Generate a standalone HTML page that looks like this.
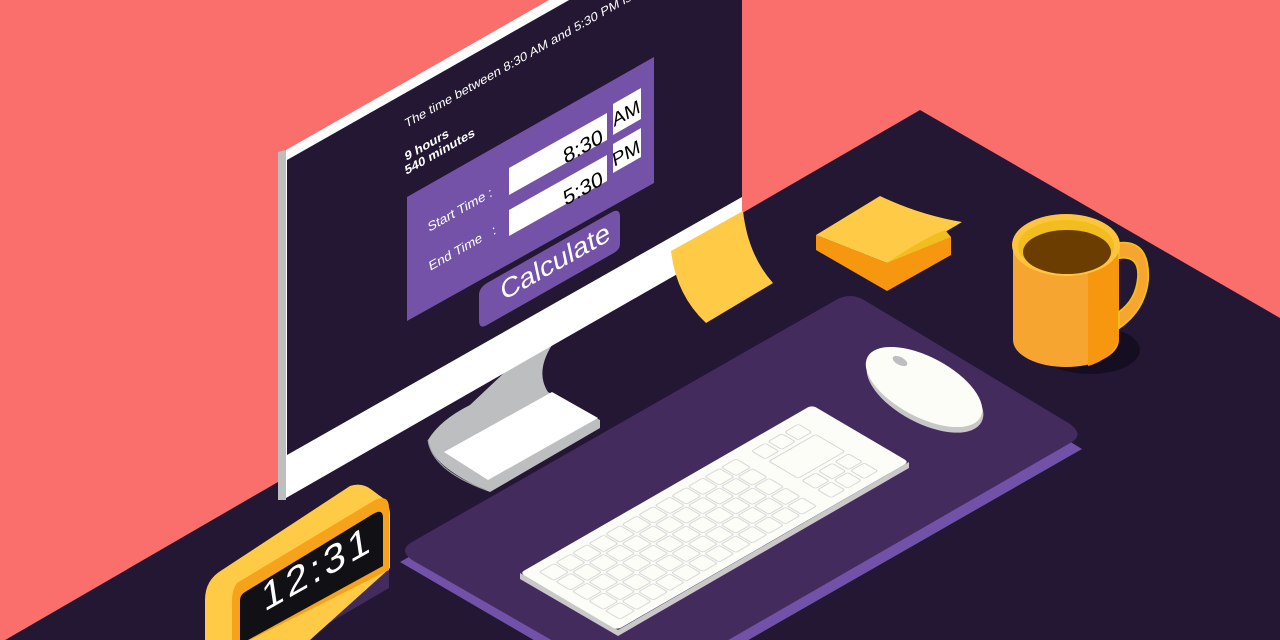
<!DOCTYPE html>
<html><head><meta charset="utf-8"><style>
html,body{margin:0;padding:0;width:1280px;height:640px;overflow:hidden;background:#FA6E6C}
svg{display:block}
text{font-family:"Liberation Sans",sans-serif}
</style></head><body>
<svg width="1280" height="640" viewBox="0 0 1280 640" xmlns="http://www.w3.org/2000/svg">
<defs>
<pattern id="keys" patternUnits="userSpaceOnUse" width="17" height="17" x="10" y="8">
<rect x="1" y="1" width="15" height="15" rx="2" fill="#FDFDF8" stroke="#D6D6D6" stroke-width="1"/>
</pattern>
</defs>
<rect width="1280" height="640" fill="#FA6E6C"/>
<polygon points="920,110 1280,318 1280,640 0,640 0,643" fill="#231733"/>

<ellipse cx="1090" cy="350" rx="50" ry="24" fill="#150E22"/>

<polygon points="400,562 850,306 1082,449 640,702" fill="#7252A8"/>
<path d="M412,542 L836,300 Q850,292 864,300 L1070,424 Q1084,434 1072,442 L652,684 Q640,690 628,684 L412,560 Q398,550 412,542 Z" fill="#442B5E"/>

<polygon points="520,573 520,579 618,636 909,468 909,462 618,630" fill="#C9C9C9"/>
<g transform="matrix(0.973,-0.56,0.97,0.57,520,573)">
<rect x="0" y="0" width="300" height="100" rx="4" fill="#FDFDF8"/>
<rect x="10" y="8" width="204" height="85" fill="url(#keys)"/>
<rect x="225" y="8" width="68" height="85" fill="#FDFDF8"/>
<rect x="228" y="10" width="14" height="14" rx="2" fill="#FDFDF8" stroke="#D6D6D6"/>
<rect x="245" y="10" width="14" height="14" rx="2" fill="#FDFDF8" stroke="#D6D6D6"/>
<rect x="262" y="10" width="14" height="14" rx="2" fill="#FDFDF8" stroke="#D6D6D6"/>
<rect x="228" y="28" width="48" height="30" rx="2" fill="#FDFDF8" stroke="#D6D6D6"/>
<rect x="228" y="62" width="14" height="14" rx="2" fill="#FDFDF8" stroke="#D6D6D6"/>
<rect x="245" y="62" width="14" height="14" rx="2" fill="#FDFDF8" stroke="#D6D6D6"/>
<rect x="262" y="62" width="14" height="14" rx="2" fill="#FDFDF8" stroke="#D6D6D6"/>
<rect x="245" y="78" width="14" height="14" rx="2" fill="#FDFDF8" stroke="#D6D6D6"/>
<rect x="262" y="78" width="14" height="14" rx="2" fill="#FDFDF8" stroke="#D6D6D6"/>
<rect x="228" y="78" width="14" height="14" rx="2" fill="#FDFDF8" stroke="#D6D6D6"/>
</g>

<ellipse cx="925" cy="392" rx="64" ry="31" transform="rotate(28 925 392)" fill="#C7C7C7"/>
<ellipse cx="924" cy="387" rx="64" ry="30" transform="rotate(28 924 387)" fill="#FDFDF8"/>
<ellipse cx="900" cy="361" rx="8" ry="4" transform="rotate(28 900 361)" fill="#BDBEC0"/>

<polygon points="816,235 816,250 887,291 951,255 951,237 887,263" fill="#F7970F"/>
<path d="M816,235 L880,196 Q920,215 962,222 L935,238 L951,237 L887,263 Z" fill="#FFCB47"/>
<path d="M887,263 Q920,240 945,230 L951,237 Z" fill="#F2BD1E"/>

<path d="M1013,245 L1013,340 A53,27 0 0 0 1119,340 L1119,245 Z" fill="#F7A531"/>
<path d="M1088,245 L1088,366 Q1110,360 1119,340 L1119,245 Z" fill="#F7970F"/>
<path d="M1119,243 Q1150,240 1148,280 Q1145,310 1119,328 L1119,312 Q1136,300 1138,278 Q1140,255 1119,258 Z" fill="#F7A531" stroke="#F2BD1E" stroke-width="2"/>
<ellipse cx="1066" cy="245" rx="54" ry="31" fill="#FFC43D"/>
<ellipse cx="1066" cy="246" rx="48" ry="26" fill="#F2BD1E"/>
<ellipse cx="1067" cy="252" rx="44" ry="22" fill="#6B3D00"/>

<path d="M505,372 L552,345 Q535,372 548,392 L600,420 L600,428 L490,492 L485,490 Q430,465 428,440 Q440,420 470,405 Z" fill="#BDBEC0"/>
<polygon points="444,452 552,392 598,418 488,480" fill="#FFFFFF"/>
<path d="M428,440 Q432,470 486,490" fill="none" stroke="#9E9FA2" stroke-width="1"/>

<polygon points="278,152 286,150 286,500 278,500" fill="#BDBEC0"/>
<polygon points="286,150 742,-110 742,237 286,498" fill="#FFFFFF"/>
<polygon points="287,160 742,-98 742,197 287,455" fill="#231733"/>

<polygon points="407,197 654,57 654,183 407,321" fill="#7352A7"/>
<polygon points="509,168 607,113 607,140 509,195" fill="#FFFFFF"/>
<polygon points="509,210 607,155 607,181 509,236" fill="#FFFFFF"/>
<polygon points="613,104 641,88 641,119 613,135" fill="#FFFFFF"/>
<polygon points="613,144 641,128 641,157 613,173" fill="#FFFFFF"/>
<path d="M487,283 L612,212 Q620,208 620,217 L620,244 Q620,250 612,254 L487,325 Q479,330 479,320 L479,295 Q479,288 487,283 Z" fill="#7352A7"/>

<g fill="#FFFFFF">
<text transform="translate(406,128) matrix(1,-0.567,0.22,1,0,0)" font-size="12">The time between 8:30 AM and 5:30 PM is:</text>
<text transform="translate(406,161) matrix(1,-0.567,0.22,1,0,0)" font-size="12" font-weight="bold">9 hours</text>
<text transform="translate(406,175) matrix(1,-0.567,0.22,1,0,0)" font-size="12" font-weight="bold">540 minutes</text>
<text transform="translate(429,232) matrix(1,-0.567,0.22,1,0,0)" font-size="12.5">Start Time :</text>
<text transform="translate(430,271) matrix(1,-0.567,0.22,1,0,0)" font-size="12.5">End Time&#160;&#160;&#160;:</text>
<text transform="translate(604,142) matrix(1,-0.567,0.22,1,0,0)" font-size="20" fill="#000" text-anchor="end">8:30</text>
<text transform="translate(604,184) matrix(1,-0.567,0.22,1,0,0)" font-size="20" fill="#000" text-anchor="end">5:30</text>
<text transform="translate(614,127) matrix(1,-0.567,0.22,1,0,0)" font-size="18" fill="#000">AM</text>
<text transform="translate(614,167) matrix(1,-0.567,0.22,1,0,0)" font-size="18" fill="#000">PM</text>
<text transform="translate(503,301) matrix(1,-0.567,0.22,1,0,0)" font-size="26">Calculate</text>
</g>

<path d="M671,251 L743,211 Q748,255 773,283 L706,323 Q676,295 671,251 Z" fill="#FFCB47"/>

<polygon points="300,640 389,588 389,565 340,600" fill="#442B5E"/>
<path d="M205,600 Q205,580 222,570 L350,486 Q362,482 372,490 L380,496 Q390,502 390,515 L390,568 L310,640 L205,640 Z" fill="#FFCB47"/>
<path d="M237,583 L375,500 Q389,494 389,508 L389,570 L250,640 L232,640 L232,600 Q232,590 237,583 Z" fill="#F7A21B"/>
<path d="M245,592 L373,514 Q383,508 383,518 L383,566 L248,640 L240,640 L240,600 Q240,595 245,592 Z" fill="#111014"/>
<text transform="translate(264,612) matrix(1,-0.567,0.15,1,0,0)" font-size="38" fill="#FFFFFF" font-family="Liberation Sans, sans-serif" letter-spacing="3">12:31</text>
</svg>
</body></html>
